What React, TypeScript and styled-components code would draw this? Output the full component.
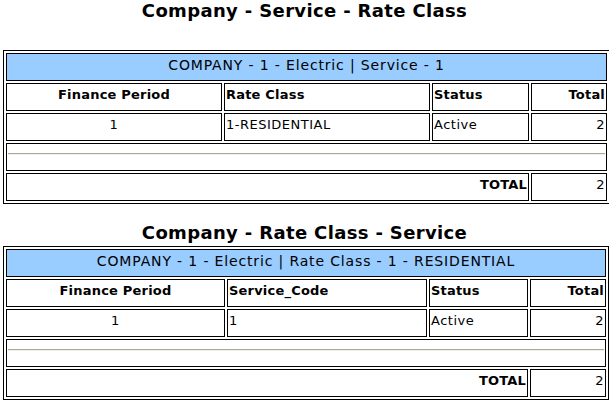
import React from "react";
import styled, { createGlobalStyle } from "styled-components";

const GlobalStyle = createGlobalStyle`
  body {
    margin: 0;
    background: #ffffff;
    font-family: "DejaVu Sans", Verdana, sans-serif;
    color: #000000;
  }
`;

type Align = "left" | "center" | "right";

interface Report {
  title: string;
  caption: string;
  second: string;
  widths: number[];
  row: string[];
  total: string;
}

const reports: Report[] = [
  {
    title: "Company - Service - Rate Class",
    caption: "COMPANY - 1 - Electric | Service - 1",
    second: "Rate Class",
    widths: [216, 206, 97, 76],
    row: ["1", "1-RESIDENTIAL", "Active", "2"],
    total: "2",
  },
  {
    title: "Company - Rate Class - Service",
    caption: "COMPANY - 1 - Electric | Rate Class - 1 - RESIDENTIAL",
    second: "Service_Code",
    widths: [219, 200, 99, 76],
    row: ["1", "1", "Active", "2"],
    total: "2",
  },
];

const headAlign: Align[] = ["center", "left", "left", "right"];
const dataAlign: Align[] = ["center", "left", "left", "right"];

export default function App() {
  return (
    <Page>
      <GlobalStyle />
      {reports.map((r, i) => (
        <Section key={i} $first={i === 0}>
          <Title $gap={i === 0 ? 28 : 2}>{r.title}</Title>
          <Table>
            <colgroup>
              {r.widths.map((w, j) => (
                <col key={j} style={{ width: w }} />
              ))}
            </colgroup>
            <tbody>
              <tr>
                <Caption colSpan={4}>{r.caption}</Caption>
              </tr>
              <tr>
                {["Finance Period", r.second, "Status", "Total"].map((h, j) => (
                  <Head key={j} $align={headAlign[j]}>
                    {h}
                  </Head>
                ))}
              </tr>
              <tr>
                {r.row.map((c, j) => (
                  <Cell key={j} $align={dataAlign[j]}>
                    {c}
                  </Cell>
                ))}
              </tr>
              <tr>
                <RuleCell colSpan={4}>
                  <Rule />
                </RuleCell>
              </tr>
              <tr>
                <Head colSpan={3} $align="right">
                  TOTAL
                </Head>
                <Cell $align="right">{r.total}</Cell>
              </tr>
            </tbody>
          </Table>
        </Section>
      ))}
    </Page>
  );
}

const Page = styled.div`
  padding: 0 3px;
  width: 603px;
`;

const Section = styled.section<{ $first: boolean }>`
  margin-top: ${(p) => (p.$first ? "0" : "18px")};
`;

const Title = styled.h1<{ $gap: number }>`
  margin: 0 0 ${(p) => p.$gap}px;
  text-align: center;
  font-size: 18px;
  line-height: 22px;
  letter-spacing: 0.35px;
  font-weight: bold;
`;

const Table = styled.table`
  width: 603px;
  table-layout: fixed;
  border: 1px solid #000;
  border-collapse: separate;
  border-spacing: 2px;
  font-size: 13px;
`;

const Cell = styled.td<{ $align: Align }>`
  border: 1px solid #000;
  height: 28px;
  box-sizing: border-box;
  padding: 0 1px 5px;
  text-align: ${(p) => p.$align};
  vertical-align: middle;
  letter-spacing: 0.5px;
  white-space: nowrap;
  overflow: hidden;
`;

const Head = styled(Cell)`
  font-weight: bold;
  letter-spacing: 0.2px;
`;

const Caption = styled.td`
  border: 1px solid #000;
  height: 28px;
  box-sizing: border-box;
  padding: 0 1px 4px;
  background: #99ccff;
  font-size: 14px;
  letter-spacing: 0.85px;
  text-align: center;
  vertical-align: middle;
  white-space: nowrap;
`;

const RuleCell = styled.td`
  border: 1px solid #000;
  height: 28px;
  box-sizing: border-box;
  padding: 9px 1px 0;
  vertical-align: top;
`;

const Rule = styled.div`
  border-top: 1px solid #aca899;
  border-bottom: 1px solid #f1efe8;
`;
